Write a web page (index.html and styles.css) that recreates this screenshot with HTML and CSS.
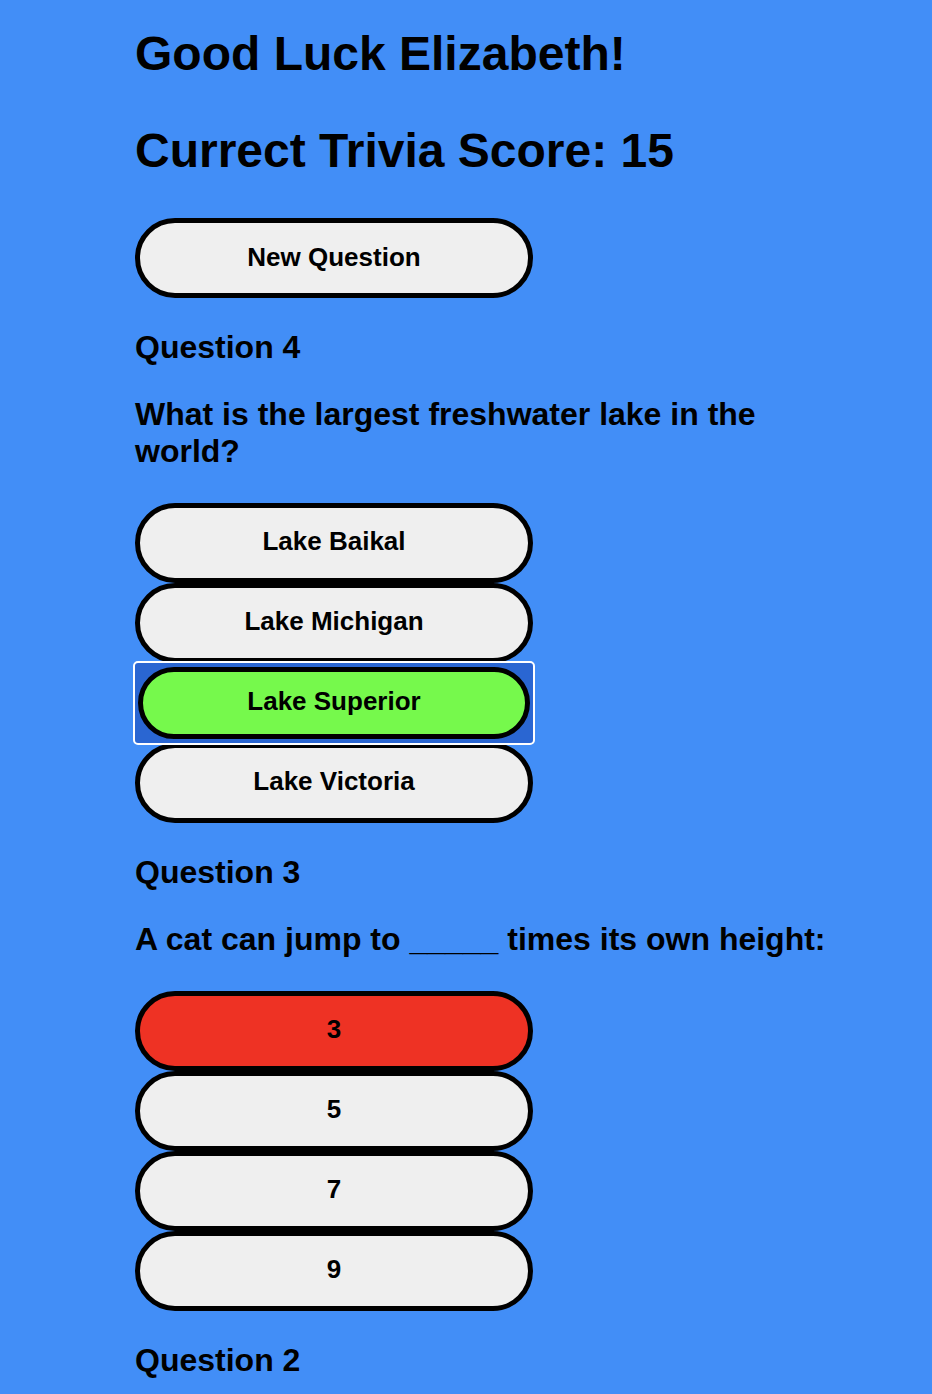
FILE: index.html
```html
<!DOCTYPE html>
<html lang="en">
<head>
<meta charset="utf-8">
<title>Trivia</title>
<link rel="stylesheet" href="styles.css">
</head>
<body>
<main class="page">
  <h1 class="greeting">Good Luck Elizabeth!</h1>
  <h2 class="score">Currect Trivia Score: 15</h2>
  <button class="pill new-question">New Question</button>

  <section class="question">
    <h3 class="q-title">Question 4</h3>
    <p class="q-text">What is the largest freshwater lake in the world?</p>
    <div class="answers">
      <button class="pill">Lake Baikal</button>
      <button class="pill">Lake Michigan</button>
      <div class="focus-ring"><button class="pill pill-small correct">Lake Superior</button></div>
      <button class="pill">Lake Victoria</button>
    </div>
  </section>

  <section class="question">
    <h3 class="q-title">Question 3</h3>
    <p class="q-text">A cat can jump to _____ times its own height:</p>
    <div class="answers">
      <button class="pill wrong">3</button>
      <button class="pill">5</button>
      <button class="pill">7</button>
      <button class="pill">9</button>
    </div>
  </section>

  <section class="question">
    <h3 class="q-title">Question 2</h3>
  </section>
</main>
</body>
</html>
```

FILE: styles.css
```css
html, body {
  margin: 0;
  padding: 0;
  background: #428ef7;
}

body {
  font-family: "Liberation Sans", Arial, sans-serif;
  color: #000;
}

.page {
  padding: 26px 0 40px 135px;
  width: 710px;
}

.greeting {
  margin: 0;
  font-size: 48px;
  font-weight: bold;
  line-height: 55px;
}

.score {
  margin: 42px 0 0;
  font-size: 48px;
  font-weight: bold;
  line-height: 55px;
}

.pill {
  display: flex;
  align-items: center;
  justify-content: center;
  box-sizing: border-box;
  width: 398px;
  height: 80px;
  margin: 0;
  padding: 0 0 3px;
  border: 5px solid #000;
  border-radius: 40px;
  background: #efefef;
  color: #000;
  font-family: "Liberation Sans", Arial, sans-serif;
  font-weight: bold;
  font-size: 26px;
}

.new-question {
  margin-top: 40px;
  padding-bottom: 1px;
}

.question {
  margin-top: 31px;
}

.q-title {
  margin: 0;
  font-size: 32px;
  font-weight: bold;
  line-height: 37px;
}

.q-text {
  margin: 30px 0 0;
  font-size: 32px;
  font-weight: bold;
  line-height: 37px;
}

.answers {
  margin-top: 33px;
  display: flex;
  flex-direction: column;
}

.focus-ring {
  box-sizing: border-box;
  width: 402px;
  height: 84px;
  margin: -2px 0 -2px -2px;
  border: 2px solid #fff;
  border-radius: 5px;
  background: #2a66d2;
  position: relative;
  z-index: 1;
  display: flex;
  align-items: center;
  justify-content: center;
}

.pill-small {
  width: 392px;
  height: 72px;
}

.correct {
  background: #76f94c;
}

.wrong {
  background: #ee3224;
}
```
